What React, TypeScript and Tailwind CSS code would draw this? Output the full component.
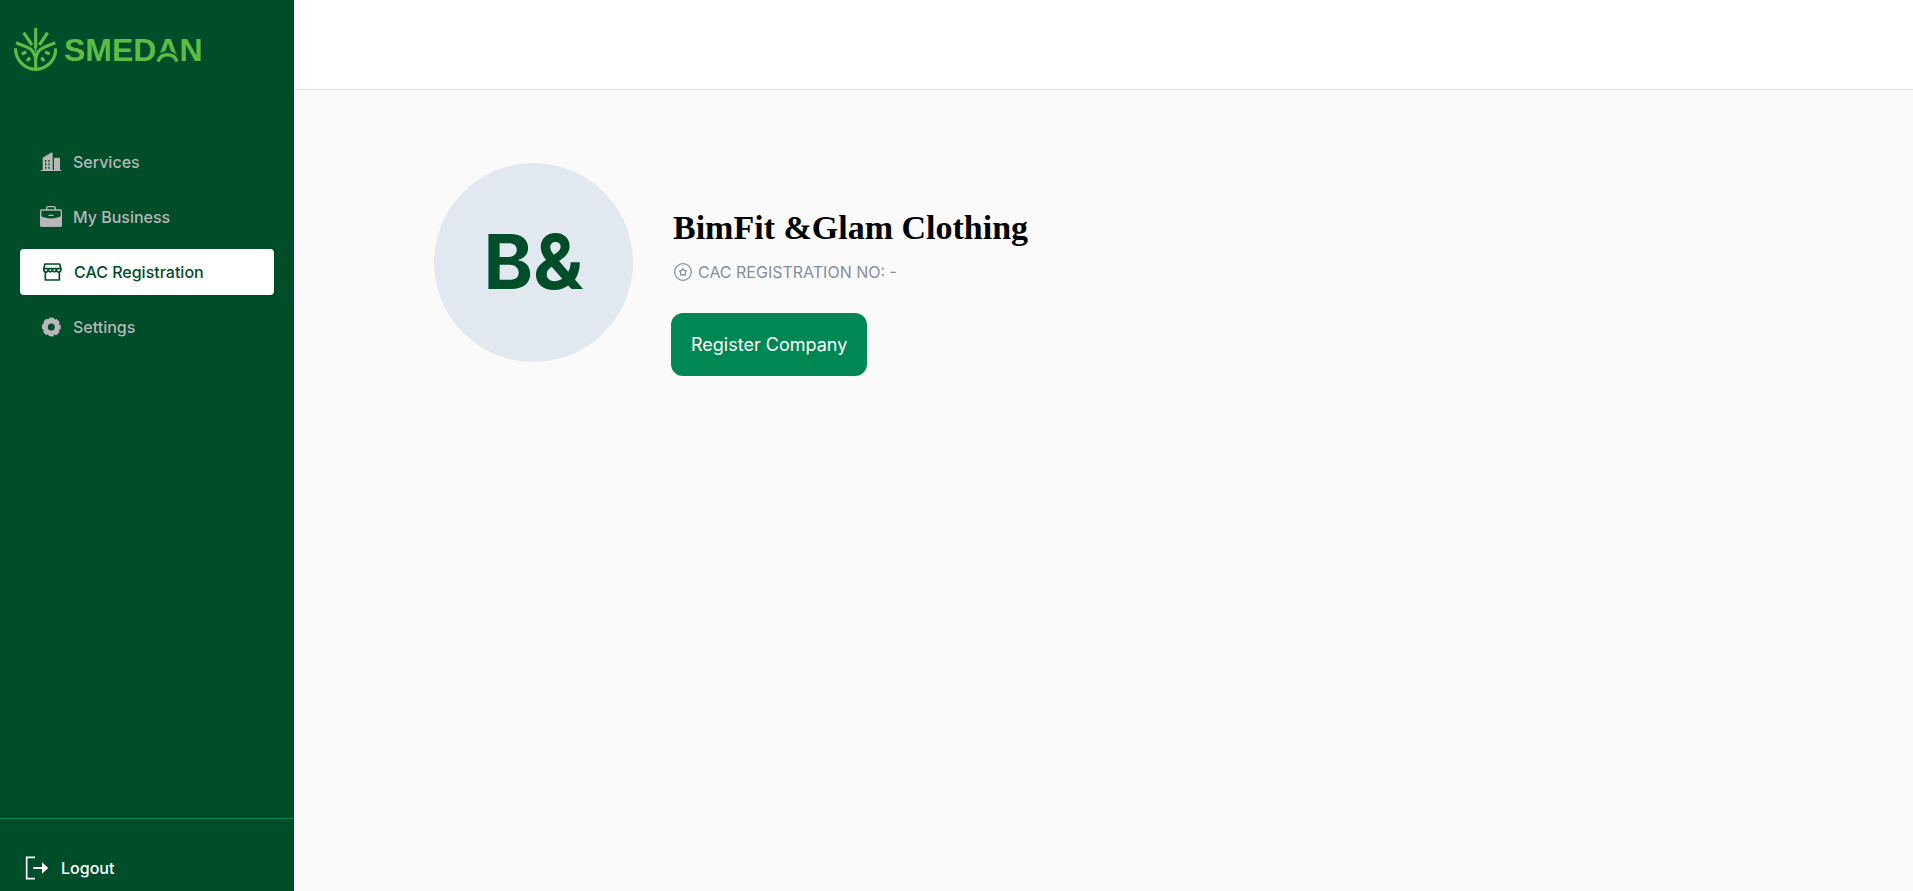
import type { ReactNode } from "react";

function LogoMark() {
  return (
    <svg viewBox="39 54 132 132" className="size-11 shrink-0" fill="none" stroke="#5cbd45" strokeWidth="9.500" aria-hidden="true">
      <path d="M46.500 115a60.500 63 0 0 0 121 0" />
      <path d="M107 54v60M71 68l25 37M143 68l-25 37" />
      <path d="M48 98l32 13c17 7 24 16 27 38" />
      <path d="M166 98l-32 13c-19 8-27 20-27 40v28" />
      <path d="M103 104l4 22 4-22z" fill="#5cbd45" strokeWidth="2" />
      <path d="M65 132l14-6M81 153l9-10M149 132l-14-6M133 153l-9-10" />
    </svg>
  );
}

function Logo() {
  return (
    <a href="#home" aria-label="SMEDAN" className="flex items-center gap-[7px] text-[#5cbd45]">
      <LogoMark />
      <span className="flex font-['Liberation_Sans',Arial,sans-serif] text-[32px] leading-11 font-bold">
        SMED
        <span className="relative">
          A
          <svg viewBox="0 0 23 44" className="absolute inset-0 size-full" fill="none" aria-hidden="true">
            <path d="M0 34V31C5 20 18 20 23 31V34z" fill="#004d29" />
            <path d="M2 33.500C5 24.500 18 24.500 21 33.500" stroke="#5cbd45" strokeWidth="3.600" />
          </svg>
        </span>
        N
      </span>
    </a>
  );
}

function BuildingsIcon() {
  return (
    <svg viewBox="0 0 66 66" className="size-[22px]" fill="currentColor" fillRule="evenodd" aria-hidden="true">
      <path d="M2 57h6V23c0-2 1-3 2-4L33 5c3-1 5 0 5 3v49h4V23c0-2 1-3 3-3h12c2 0 3 1 3 3v34h4v3H2zM15 27v6h4v-6zm10 0v6h4v-6zM15 37v6h4v-6zm10 0v6h4v-6zM15 47v6h4v-6zm10 0v6h4v-6z" />
    </svg>
  );
}

function BriefcaseIcon() {
  return (
    <svg viewBox="0 0 66 66" className="size-[22px]" fill="none" aria-hidden="true">
      <path d="M20 12V6c0-2 2-4 4-4h18c2 0 4 2 4 4v6" stroke="currentColor" strokeWidth="4" />
      <rect x="2" y="12" width="62" height="48" rx="3" stroke="currentColor" strokeWidth="4" />
      <path d="M0 29c22 11 44 11 66 0v29c0 2-2 4-4 4H4c-2 0-4-2-4-4z" fill="currentColor" />
      <path d="M27 28h12" stroke="currentColor" strokeWidth="4" strokeLinecap="round" />
    </svg>
  );
}

function StoreIcon() {
  return (
    <svg viewBox="0 0 66 66" className="size-[22px]" fill="none" stroke="currentColor" strokeWidth="5" strokeLinejoin="round" aria-hidden="true">
      <path d="M12 9h44l4 15c0 12-12 12-14 2-2 9-10 9-12 0-2 9-10 9-12 0-2 10-14 10-14-2zM8 23h52" />
      <path d="M13 34v23h42V34" />
    </svg>
  );
}

function GearIcon() {
  return (
    <svg viewBox="0 0 66 66" className="size-[22px]" fill="none" stroke="currentColor" aria-hidden="true">
      <circle cx="34" cy="33" r="18" strokeWidth="15" />
      <circle cx="34" cy="33" r="24" strokeWidth="9" strokeDasharray="13.850 5" strokeDashoffset="6.900" />
    </svg>
  );
}

function LogoutIcon() {
  return (
    <svg viewBox="0 0 72 72" className="size-6" fill="none" stroke="currentColor" strokeWidth="5" aria-hidden="true">
      <path d="M33 4H8v64h25" />
      <path d="M30 36h24" strokeWidth="6" strokeLinecap="round" />
      <path d="M54 19l19 17-19 17z" fill="currentColor" stroke="none" />
    </svg>
  );
}

function BadgeIcon() {
  return (
    <svg viewBox="0 0 54 54" className="size-[18px]" fill="none" stroke="currentColor" strokeWidth="3.500" aria-hidden="true">
      <circle cx="27" cy="27" r="25" />
      <path d="M27 17l4 5 6 1-3 6v7l-7-1-7 1v-7l-3-6 6-1z" strokeLinejoin="round" />
    </svg>
  );
}

const items: { label: string; icon: ReactNode; active?: boolean }[] = [
  { label: "Services", icon: <BuildingsIcon /> },
  { label: "My Business", icon: <BriefcaseIcon /> },
  { label: "CAC Registration", icon: <StoreIcon />, active: true },
  { label: "Settings", icon: <GearIcon /> },
];

export default function App() {
  return (
    <div className="flex min-h-screen bg-[#fafafa] font-['Inter',sans-serif]">
      <aside className="flex w-[294px] shrink-0 flex-col bg-[#004d29]">
        <div className="px-[13px] pt-7">
          <Logo />
        </div>
        <nav className="mt-[67px] flex flex-col gap-[9px] px-5 font-medium">
          {items.map((item) => (
            <a
              key={item.label}
              href="#section"
              aria-current={item.active ? "page" : undefined}
              className={
                item.active
                  ? "flex h-[46px] items-center gap-[11px] rounded-sm bg-white px-[21px] text-[#004d29]"
                  : "flex h-[46px] items-center gap-[11px] rounded-sm px-5 text-[#b8b8b8]"
              }
            >
              {item.icon}
              {item.label}
            </a>
          ))}
        </nav>
        <div className="mt-auto border-t border-[#008753] px-6 pt-9 pb-2.5">
          <button type="button" className="flex items-center gap-[13px] leading-[26px] font-medium text-white">
            <LogoutIcon />
            Logout
          </button>
        </div>
      </aside>

      <div className="flex min-w-0 flex-1 flex-col">
        <header className="h-[90px] border-b border-[#e2e2e2] bg-white" />
        <main className="flex gap-[38px] px-[140px] pt-[73px]">
          <div className="flex size-[199px] shrink-0 items-center justify-center rounded-full bg-[#e1e8f0] pb-0.5 text-[75px] leading-none font-bold text-[#004d29]">
            B&amp;
          </div>
          <div className="flex flex-col items-start pt-[45px]">
            <h1 className="pl-0.5 font-['Liberation_Serif',serif] text-[34px] leading-10 font-bold text-black">
              BimFit &amp;Glam Clothing
            </h1>
            <p className="mt-3 flex items-center gap-1.5 pl-[3px] leading-6 text-[#858d9d]">
              <BadgeIcon />
              CAC REGISTRATION NO: -
            </p>
            <button
              type="button"
              className="mt-[29px] rounded-xl bg-[#008753] px-5 py-[18px] text-lg leading-[27px] text-white"
            >
              Register Company
            </button>
          </div>
        </main>
      </div>
    </div>
  );
}
